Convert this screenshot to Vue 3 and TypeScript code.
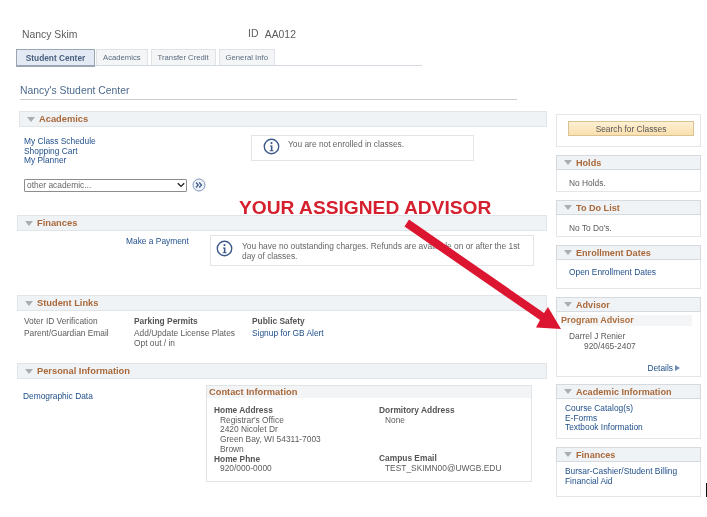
<script setup lang="ts">
const tabs = ['Student Center', 'Academics', 'Transfer Credit', 'General Info']
</script>

<template>
  <div class="page">
    <header class="who">
      <span class="name">Nancy Skim</span>
      <span class="id"><span class="idl">ID</span> AA012</span>
    </header>
    <nav class="tabs">
      <a v-for="(t, i) in tabs" :key="t" class="tab" :class="{ on: i === 0 }">{{ t }}</a>
    </nav>
    <h1 class="title">Nancy's Student Center</h1>

    <div class="cols">
      <main class="left">
        <section class="acad">
          <h2 class="bar first"><i class="tri"></i>Academics</h2>
          <div class="acad-body">
            <div class="links l1">
              <a>My Class Schedule</a>
              <a>Shopping Cart</a>
              <a>My Planner</a>
            </div>
            <div class="note n1">
              <svg class="info" viewBox="0 0 16 16"><circle cx="8" cy="8" r="6.8" fill="#fff" stroke="#3d5a8a" stroke-width="1.3"/><circle cx="8" cy="4.8" r="1" fill="#3d5a8a"/><path d="M6.5 7h2.4v4.6h1v.9H6.4v-.9h1V7.9h-.9z" fill="#3d5a8a"/></svg>
              <span>You are not enrolled in classes.</span>
            </div>
          </div>
          <div class="sel-row">
            <div class="sel-wrap">
              <select class="sel"><option>other academic...</option></select>
              <svg class="chev" viewBox="0 0 10 7"><path d="M1 1.2 5 5.2 9 1.2" fill="none" stroke="#222" stroke-width="1.7"/></svg>
            </div>
            <svg class="go" viewBox="0 0 14 14"><circle cx="7" cy="7" r="6" fill="#eef2f8" stroke="#7f97bd"/><path d="M4 4.5 6.3 7 4 9.5M7.2 4.5 9.5 7 7.2 9.5" fill="none" stroke="#3d5a8a" stroke-width="1.2"/></svg>
          </div>
        </section>

        <section class="fin">
          <h2 class="bar"><i class="tri"></i>Finances</h2>
          <div class="fin-body">
            <a class="pay">Make a Payment</a>
            <div class="note n2">
              <svg class="info" viewBox="0 0 16 16"><circle cx="8" cy="8" r="6.8" fill="#fff" stroke="#3d5a8a" stroke-width="1.3"/><circle cx="8" cy="4.8" r="1" fill="#3d5a8a"/><path d="M6.5 7h2.4v4.6h1v.9H6.4v-.9h1V7.9h-.9z" fill="#3d5a8a"/></svg>
              <span>You have no outstanding charges. Refunds are available on or after the 1st day of classes.</span>
            </div>
          </div>
        </section>

        <section class="sl">
          <h2 class="bar"><i class="tri"></i>Student Links</h2>
          <div class="sl-body">
            <div class="c c1"><p>Voter ID Verification</p><p>Parent/Guardian Email</p></div>
            <div class="c c2"><b>Parking Permits</b><p>Add/Update License Plates</p><p>Opt out / in</p></div>
            <div class="c c3"><b>Public Safety</b><a>Signup for GB Alert</a></div>
          </div>
        </section>

        <section class="pi">
          <h2 class="bar"><i class="tri"></i>Personal Information</h2>
          <div class="pi-body">
            <a class="demo">Demographic Data</a>
            <div class="contact">
              <h3>Contact Information</h3>
              <div class="cgrid">
                <div>
                  <b>Home Address</b>
                  <p>Registrar's Office</p><p>2420 Nicolet Dr</p><p>Green Bay, WI 54311-7003</p><p>Brown</p>
                  <b>Home Phne</b>
                  <p>920/000-0000</p>
                </div>
                <div>
                  <b>Dormitory Address</b>
                  <p>None</p>
                  <div class="sp"></div>
                  <b>Campus Email</b>
                  <p>TEST_SKIMN00@UWGB.EDU</p>
                </div>
              </div>
            </div>
          </div>
        </section>
      </main>

      <aside class="right">
        <div class="card search"><button class="btn">Search for Classes</button></div>
        <div class="card h22"><h2 class="head"><i class="tri"></i>Holds</h2><p class="txt">No Holds.</p></div>
        <div class="card h37"><h2 class="head"><i class="tri"></i>To Do List</h2><p class="txt">No To Do's.</p></div>
        <div class="card h44"><h2 class="head"><i class="tri"></i>Enrollment Dates</h2><a class="txt lk">Open Enrollment Dates</a></div>
        <div class="card adv">
          <h2 class="head"><i class="tri"></i>Advisor</h2>
          <h3 class="prog">Program Advisor</h3>
          <p class="an">Darrel J Renier</p>
          <p class="ap">920/465-2407</p>
          <a class="det">Details<i class="play"></i></a>
        </div>
        <div class="card ai">
          <h2 class="head"><i class="tri"></i>Academic Information</h2>
          <div class="list"><a>Course Catalog(s)</a><a>E-Forms</a><a>Textbook Information</a></div>
        </div>
        <div class="card fi">
          <h2 class="head"><i class="tri"></i>Finances</h2>
          <div class="list"><a>Bursar-Cashier/Student Billing</a><a>Financial Aid</a></div>
        </div>
      </aside>
    </div>

    <div class="callout">YOUR ASSIGNED ADVISOR</div>
    <svg class="arrow" viewBox="0 0 707 517" width="707" height="517">
      <path d="M404.5 226.5 409 219.5 544 313 548 307 561 329 536 327.5 540 320Z" fill="#dc1630"/>
    </svg>
    <i class="cursor"></i>
  </div>
</template>

<style scoped>
.page {
  position: relative;
  width: 707px;
  height: 517px;
  overflow: hidden;
  background: #fff;
  font: 8.4px/10px "Liberation Sans", Arial, sans-serif;
  color: #5c5c5c;
  filter: blur(0.35px);
}
h1, h2, h3, p { margin: 0; font: inherit; }
a { color: #1f4f8a; display: block; }
.who { display: flex; padding: 28px 0 0 22px; height: 49px; box-sizing: border-box; font-size: 10.4px; line-height: 13px; color: #5c5c5c; }
.name { width: 226px; }
.idl { position: relative; top: -1px; margin-right: 4px; }
.tabs { display: flex; margin-left: 16px; width: 406px; height: 17px; border-bottom: 1px solid #d5dae0; box-sizing: border-box; gap: 3px; }
.tab { padding: 0 6px; height: 16px; line-height: 15px; background: #f3f5f7; border: 1px solid #dfe3e7; border-bottom: 0; box-sizing: border-box; color: #5a6b7f; font-size: 7.7px; }
.tab:nth-child(2) { margin-left: -2px; }
.tab.on { width: 79px; height: 18px; padding: 0; font-size: 8.3px; text-align: center; line-height: 16px; font-weight: bold; background: #e3eaf3; color: #47607f; border: 1px solid #9aa6b4; border-bottom: 2px solid #9aa6b4; }
.title { margin: 18px 0 0 20px; width: 497px; height: 15px; border-bottom: 1px solid #c9cdd2; font-size: 10.4px; line-height: 14px; color: #4d6a8c; }
.cols { display: grid; grid-template-columns: 530px 145px; column-gap: 9px; padding-left: 17px; margin-top: 11px; }
.bar { height: 16px; background: #f0f3f5; border: 1px solid #e1e5e8; box-sizing: border-box; font-size: 9.3px; font-weight: bold; line-height: 14px; color: #a8683a; padding-left: 7px; display: flex; align-items: center; }
.bar.first { margin-left: 2px; }
.tri { display: inline-block; width: 0; height: 0; border: 4px solid transparent; border-top: 5px solid #a9aeb3; border-bottom: 0; margin-right: 4px; flex: none; }
.acad { height: 104px; }
.acad-body { display: flex; height: 48px; padding: 10px 0 0 7px; box-sizing: content-box; }
.links { width: 227px; line-height: 9.5px; margin-top: 0; }
.note { display: flex; background: #fff; border: 1px solid #e2e5e8; box-sizing: border-box; color: #666; }
.n1 { width: 223px; height: 26px; padding: 2px 0 0 11px; gap: 8px; margin-top: -2px; line-height: 10px; }
.n1 span { padding-top: 1px; }
.info { width: 17px; height: 17px; flex: none; }
.sel-row { display: flex; align-items: center; padding-left: 7px; gap: 3px; margin-top: -7px; }
.sel-wrap { position: relative; width: 163px; height: 13px; }
.sel { display: block; width: 100%; height: 13px; padding: 0 0 0 2px; appearance: none; font: 8.4px "Liberation Sans", sans-serif; color: #666; background: #fff; border: 1px solid #8d8d8d; border-radius: 1px; box-sizing: border-box; }
.chev { position: absolute; right: 2px; top: 3px; width: 8px; height: 6px; pointer-events: none; }
.go { width: 14px; height: 14px; margin-left: 2px; }
.fin { margin-top: 0; height: 80px; }
.fin-body { display: flex; padding: 4px 0 0 109px; }
.pay { width: 84px; padding-top: 1px; }
.n2 { width: 324px; height: 31px; padding: 4px 6px 0 5px; gap: 9px; line-height: 10px; }
.n2 span { padding-top: 1px; }
.sl { height: 68px; }
.sl-body { display: flex; padding: 5px 0 0 7px; line-height: 10.5px; }
.c b { display: block; color: #555; }
.c1 { width: 110px; }
.c1 p:first-child { margin-bottom: 1px; }
.c2 { width: 118px; }
.c2 b, .c3 b { margin-bottom: 1px; }
.pi-body { display: flex; padding-left: 6px; }
.demo { width: 183px; padding-top: 12px; }
.contact { width: 326px; height: 97px; margin-top: 6px; border: 1px solid #e1e4e7; box-sizing: border-box; }
.contact h3 { height: 12px; background: #f2f4f6; font-size: 9.3px; line-height: 12px; font-weight: bold; color: #a8683a; padding-left: 2px; }
.cgrid { display: grid; grid-template-columns: 165px 1fr; padding: 8px 0 0 7px; line-height: 9.7px; }
.cgrid b { display: block; color: #555; }
.cgrid p { padding-left: 6px; }
.sp { height: 29px; }
.right { display: flex; flex-direction: column; margin-top: 3px; }
.card { border: 1px solid #e3e6e9; box-sizing: border-box; }
.search { height: 33px; padding: 6px 0 0 11px; margin-bottom: 8px; }
.btn { display: block; width: 126px; height: 15px; padding: 0; border: 1px solid #d8c392; background: linear-gradient(#fdf0d4, #fbdfae); font: 8.4px "Liberation Sans", sans-serif; color: #555; }
.head { height: 15px; margin: -1px -1px 0; border: 1px solid #d6dade; box-sizing: border-box; background: #f0f3f5; font-size: 9.1px; font-weight: bold; color: #a8683a; display: flex; align-items: center; padding-left: 7px; }
.txt { padding: 8px 0 0 12px; }
.lk { padding-top: 7px; }
.h22 { height: 37px; margin-bottom: 8px; }
.h37 { height: 37px; margin-bottom: 8px; }
.h44 { height: 44px; margin-bottom: 8px; }
.adv { height: 80px; margin-bottom: 7px; }
.prog { margin: 3px 8px 0 4px; height: 11px; background: #f4f5f6; font-size: 9px; line-height: 10px; font-weight: bold; color: #b0703f; }
.an { padding: 5px 0 0 12px; }
.ap { padding: 0 0 0 27px; }
.det { display: flex; justify-content: flex-end; align-items: center; padding: 12px 20px 0 0; gap: 2px; }
.play { width: 0; height: 0; border: 3.5px solid transparent; border-left: 5px solid #6e8cb5; border-right: 0; }
.ai { height: 55px; margin-bottom: 8px; }
.fi { height: 50px; }
.list { padding: 5px 0 0 8px; line-height: 9.7px; }
.callout { position: absolute; left: 239px; top: 197px; font: bold 19.2px/22px "Liberation Sans", Arial, sans-serif; color: #d5202f; white-space: nowrap; }
.arrow { position: absolute; left: 0; top: 0; pointer-events: none; }
.cursor { position: absolute; left: 706px; top: 483px; width: 1px; height: 14px; background: #111; }
</style>
